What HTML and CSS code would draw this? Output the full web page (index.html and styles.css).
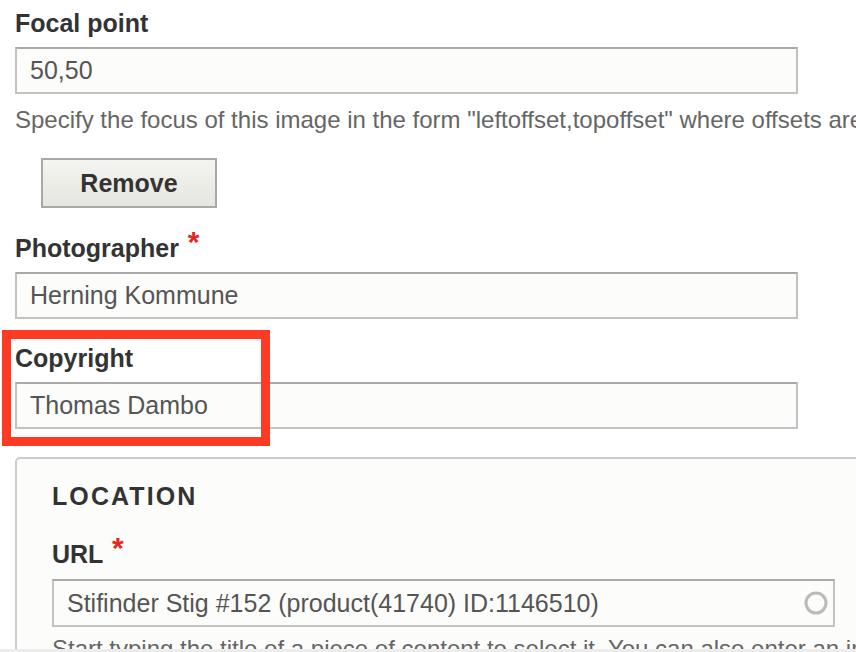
FILE: index.html
```html
<!DOCTYPE html>
<html lang="en">
<head>
<meta charset="utf-8">
<title>Image fields</title>
<link rel="stylesheet" href="styles.css">
</head>
<body>
<div class="page">
  <div class="field">
    <label class="label">Focal point</label>
    <div class="input">50,50</div>
    <div class="desc">Specify the focus of this image in the form "leftoffset,topoffset" where offsets are in percents. Ex: 25,75.</div>
  </div>
  <div class="actions">
    <button class="btn" type="button">Remove</button>
  </div>
  <div class="field field-next">
    <label class="label">Photographer <span class="req">*</span></label>
    <div class="input">Herning Kommune</div>
  </div>
  <div class="field field-next highlighted">
    <label class="label">Copyright</label>
    <div class="input">Thomas Dambo</div>
    <div class="highlight-box"></div>
  </div>
  <div class="fieldset">
    <div class="legend">LOCATION</div>
    <div class="field field-url">
      <label class="label">URL <span class="req">*</span></label>
      <div class="input input-auto">
        <span>Stifinder Stig #152 (product(41740) ID:1146510)</span>
        <svg class="throbber" width="28" height="28" viewBox="0 0 28 28"><circle cx="14" cy="14" r="10" fill="none" stroke="#bababa" stroke-width="3"/></svg>
      </div>
      <div class="desc desc-url">Start typing the title of a piece of content to select it. You can also enter an internal path such as /node/add or an external URL such as http://example.com.</div>
    </div>
  </div>
</div>
<div class="bottom-edge"></div>
</body>
</html>
```

FILE: styles.css
```css
html, body {
  margin: 0;
  padding: 0;
  background: #ffffff;
  overflow: hidden;
}

body {
  font-family: "Liberation Sans", Arial, sans-serif;
  color: #333333;
}

.page {
  padding: 8px 0 0 15px;
  width: 1600px;
}

.field {
  position: relative;
}

.field-next {
  margin-top: 24px;
}

.label {
  display: block;
  font-size: 25px;
  line-height: 30px;
  font-weight: bold;
  color: #333333;
  margin-bottom: 9px;
}

.req {
  color: #e8261c;
  font-size: 30px;
  position: relative;
  top: -5px;
  margin-left: 2px;
}

.input {
  box-sizing: border-box;
  width: 783px;
  height: 47px;
  border: 2px solid #c2c2c2;
  border-top-color: #a9a9a9;
  background: #fcfcfa;
  padding: 0 13px;
  font-size: 25px;
  line-height: 43px;
  color: #555555;
  white-space: nowrap;
  overflow: hidden;
}

.desc {
  margin-top: 12px;
  font-size: 24px;
  line-height: 28px;
  color: #666666;
  white-space: nowrap;
}

.actions {
  margin-top: 24px;
  padding-left: 26px;
}

.btn {
  box-sizing: border-box;
  width: 176px;
  height: 50px;
  border: 2px solid #a8a8a8;
  background: linear-gradient(#f4f4f0, #e6e6e0);
  font-family: "Liberation Sans", Arial, sans-serif;
  font-size: 25px;
  font-weight: bold;
  color: #333333;
  padding: 0;
  margin: 0;
}

.highlight-box {
  position: absolute;
  left: -13px;
  top: -13px;
  width: 268px;
  height: 116px;
  box-sizing: border-box;
  border: 9px solid #fd3b24;
  pointer-events: none;
}

.fieldset {
  margin-top: 28px;
  width: 1000px;
  border: 2px solid #cccccc;
  border-radius: 5px;
  background: #fcfcfa;
  padding: 22px 35px 40px;
}

.legend {
  font-size: 25px;
  line-height: 30px;
  font-weight: bold;
  letter-spacing: 2.1px;
  color: #333333;
}

.field-url {
  margin-top: 27px;
}

.field-url .label {
  margin-bottom: 10px;
}

.input-auto {
  height: 48px;
  display: flex;
  align-items: center;
  justify-content: space-between;
  padding-right: 3px;
}

.throbber {
  flex: none;
  filter: blur(0.5px);
}

.desc-url {
  margin-top: 8px;
}

.bottom-edge {
  position: fixed;
  left: 0;
  right: 0;
  bottom: 0;
  height: 3px;
  background: #ececec;
}
```
